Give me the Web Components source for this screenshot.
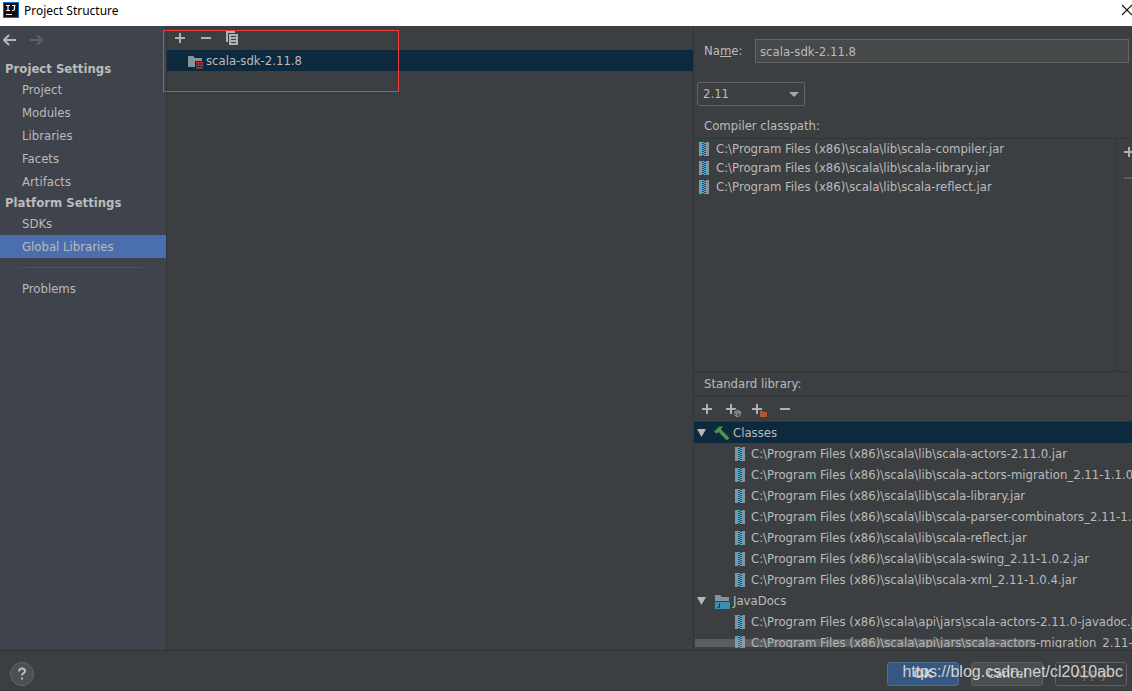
<!DOCTYPE html>
<html lang="en">
<head>
<meta charset="utf-8">
<title>Project Structure</title>
<style>
  html, body { margin: 0; height: 100%; overflow: hidden; }
  body { font: 13px/20px "DejaVu Sans Condensed", "Open Sans", sans-serif; color: #bbbbbb; background: #3c3f41; }
</style>
</head>
<body>
<project-structure></project-structure>

<script>
const define = (name, html, setup) => {
  const template = document.createElement('template');
  template.innerHTML = html;
  customElements.define(name, class extends HTMLElement {
    constructor() {
      super();
      this.attachShadow({ mode: 'open' }).append(template.content.cloneNode(true));
    }
    connectedCallback() { if (setup) setup(this, this.shadowRoot); }
  });
};

const ICONS = {
  app: '<rect width="16" height="16" fill="#0d6fd6"/><rect x="1" y="1" width="14" height="14" fill="#111"/><path d="M3 3.5h4M5 3.5v5M3 8.500h4M9 3.500h3.500M11.500 3.500v3.500q0 1.500-1.500 1.500H9" stroke="#fff" stroke-width="1.200" fill="none"/><path d="M3 12h6v1H3z" fill="#fff"/>',
  back: '<path d="M14 8H2.500M7 3L2 8l5 5" fill="none" stroke="#b4b6b8" stroke-width="2"/>',
  forward: '<path d="M2 8H13.500M9 3l5 5-5 5" fill="none" stroke="#5d6063" stroke-width="2"/>',
  close: '<path d="M3 3l10 10M13 3L3 13" stroke="#111" stroke-width="1.100"/>',
  plus: '<path d="M7 3h2v4h4v2H9v4H7V9H3V7h4z" fill="#afb1b3"/>',
  minus: '<path d="M3 7h10v2H3z" fill="#afb1b3"/>',
  dimminus: '<path d="M3 7h10v2H3z" fill="#5b5e60"/>',
  copy: '<path d="M2 1h9v2H4v9H2z" fill="#afb1b3"/><path fill-rule="evenodd" d="M5 4h9v11H5zM7 6v1h5V6zM7 9v1h5V9zM7 12v1h5v-1z" fill="#afb1b3"/>',
  globe: '<path d="M5 3h2v4h4v2H7v4H5V9H1V7h4z" fill="#afb1b3"/><circle cx="12.500" cy="12.500" r="4.500" fill="#3c3f41"/><circle cx="12.500" cy="12.500" r="3" fill="none" stroke="#9da1a4"/><path d="M10 11l2.500 1-1 2.500M13 10l1 2 1.500-.5" fill="none" stroke="#b5b8ba"/>',
  plusfolder: '<path d="M5 3h2v4h4v2H7v4H5V9H1V7h4z" fill="#afb1b3"/><path d="M8 9h8v7H8z" fill="#3c3f41"/><path d="M9 10h3l1 1h3v5H9z" fill="#b4552d"/>',
  library: '<path d="M1 3h5l2 2h7v9H1z" fill="#87939a"/><path d="M8 8h8v8H8z" fill="#0d293e"/><path d="M9 9h7v1.500H9zM9 11.500h7V13H9zM9 14h7v1.500H9z" fill="#d22d35"/>',
  jar: '<path d="M3 1h10v14H3z" fill="#87939a"/><path d="M6 1h4v14H6z" fill="#244c60"/><path d="M6 1h2v1H6zM8 2h2v1H8zM6 3h2v1H6zM8 4h2v1H8zM6 5h2v1H6zM8 6h2v1H8zM6 7h2v1H6zM8 8h2v1H8zM6 9h2v1H6zM8 10h2v1H8zM6 11h2v1H6zM8 12h2v1H8zM6 13h2v1H6zM8 14h2v1H8z" fill="#3fb6e3"/>',
  hammer: '<path d="M0 6.500L5.500 1.500 9 1.200 6.800 4.200 15.500 13l-2.600 2.500L4.500 7 2.800 8.800z" fill="#4a9641"/>',
  docs: '<path d="M1 2h5l2 2h7v4H1z" fill="#87939a"/><path d="M1 9h15v7H1z" fill="#3a8fb0"/><path d="M5.500 10.500v3q0 1-1 1H3.500" fill="none" stroke="#17343f" stroke-width="1.200"/>',
  open: '<path d="M3 4h9L7.500 12z" fill="#b5b7b9"/>',
  help: '<path d="M5 5.500q0-3 3-3t3 2.700c0 2-3 2-3 4.300M8 11.500v2" fill="none" stroke="#b8babc" stroke-width="2"/>'
};
customElements.define('ps-icon', class extends HTMLElement {
  static observedAttributes = ['name'];
  constructor() { super(); this.attachShadow({ mode: 'open' }); }
  attributeChangedCallback() {
    this.shadowRoot.innerHTML = `<style>:host{display:block;flex:none;width:16px;height:16px}svg{display:block}</style>
      <svg width="16" height="16" viewBox="0 0 16 16" aria-hidden="true">${ICONS[this.getAttribute('name')]}</svg>`;
  }
});

define('icon-button', `
  <style>
    :host { display: block; flex: none; }
    button { display: block; border: 0; padding: 0; background: none; }
  </style>
  <button type="button"><ps-icon></ps-icon></button>`, (host, root) => {
    root.querySelector('button').setAttribute('aria-label', host.getAttribute('label'));
    root.querySelector('ps-icon').setAttribute('name', host.getAttribute('icon'));
  });

define('title-bar', `
  <style>
    :host { display: flex; flex: none; align-items: flex-start; height: 26px; padding-left: 3px;
            box-sizing: border-box; background: #fff; color: #000; font: 12px/22px "Noto Sans", "Open Sans", sans-serif; }
    ps-icon, icon-button { margin-top: 2px; }
    span { flex: 1; margin-left: 5px; }
    icon-button { margin-right: -3px; }
  </style>
  <ps-icon name="app"></ps-icon><span><slot></slot></span><icon-button icon="close" label="Close"></icon-button>`);

define('nav-heading', `
  <style>:host { display: block; padding-left: 5px; font-weight: 700; line-height: 19px; }</style><slot></slot>`);

define('nav-item', `
  <style>
    :host { display: block; }
    a { display: block; padding-left: 22px; line-height: 23px; color: inherit; text-decoration: none; }
    :host([selected]) a { background: #4b6eaf; }
  </style>
  <a href="#"><slot></slot></a>`);

define('settings-nav', `
  <style>
    :host { display: block; flex: none; width: 166px; background: #3e434c; border-right: 1px solid #323537; }
    .history { display: flex; gap: 10px; padding: 6px 2px 11px; }
    hr { height: 1px; margin: 9px 8px; border: 0; background: linear-gradient(90deg, transparent, #515658 20%, #515658 80%, transparent); }
  </style>
  <div class="history"><icon-button icon="back" label="Back"></icon-button><icon-button icon="forward" label="Forward"></icon-button></div>
  <nav>
    <nav-heading>Project Settings</nav-heading>
    <nav-item>Project</nav-item>
    <nav-item>Modules</nav-item>
    <nav-item>Libraries</nav-item>
    <nav-item>Facets</nav-item>
    <nav-item>Artifacts</nav-item>
    <nav-heading>Platform Settings</nav-heading>
    <nav-item>SDKs</nav-item>
    <nav-item selected>Global Libraries</nav-item>
    <hr>
    <nav-item>Problems</nav-item>
  </nav>`);

define('library-list', `
  <style>
    :host { display: block; flex: 1; min-width: 0; border-right: 1px solid #323537; }
    .tools { display: flex; gap: 10px; padding: 4px 5px; }
    .row { display: flex; align-items: center; gap: 3px; height: 21px; padding-left: 20px; background: #0d293e; }
  </style>
  <div class="tools">
    <icon-button icon="plus" label="Add"></icon-button>
    <icon-button icon="minus" label="Remove"></icon-button>
    <icon-button icon="copy" label="Copy"></icon-button>
  </div>
  <div class="row"><ps-icon name="library"></ps-icon><span>scala-sdk-2.11.8</span></div>`);

define('file-row', `
  <style>
    :host { display: flex; align-items: center; gap: 4px; white-space: nowrap; line-height: 19px; }
  </style>
  <ps-icon name="jar"></ps-icon><span><slot></slot></span>`);

define('tree-group', `
  <style>
    :host { display: block; }
    .head { display: flex; align-items: center; height: 21px; line-height: 19px; }
    .head ps-icon + ps-icon { margin: 0 3px 0 4px; }
    :host([selected]) .head { background: #0d293e; }
    ::slotted(file-row) { height: 21px; padding-left: 38px; gap: 3px; }
  </style>
  <div class="head"><ps-icon name="open"></ps-icon><ps-icon id="kind"></ps-icon><span></span></div>
  <slot></slot>`, (host, root) => {
    root.getElementById('kind').setAttribute('name', host.getAttribute('icon'));
    root.querySelector('span').textContent = host.getAttribute('label');
  });

define('library-editor', `
  <style>
    :host { display: flex; flex-direction: column; flex: 0 0 438px; min-width: 0; overflow: hidden; }
    .name { display: flex; align-items: center; padding: 13px 3px 0 10px; }
    .name label { width: 51px; }
    input { flex: 1; min-width: 0; height: 24px; box-sizing: border-box; padding: 0 4px; border: 1px solid #646464;
            background: #45494a; color: inherit; font: inherit; }
    .version { display: flex; position: relative; width: 108px; margin: 19px 0 0 3px; }
    .version select { appearance: none; width: 100%; height: 24px; padding: 0 5px; border: 1px solid #646464;
            border-radius: 2px; background: #3c3f41; color: inherit; font: inherit; }
    .version svg { position: absolute; right: 6px; top: 10px; pointer-events: none; }
    h2 { margin: 0; padding-left: 10px; font: inherit; line-height: 24px; }
    .version + h2 { padding-top: 8px; }
    .classpath { display: flex; flex: 232 1 0; min-height: 0; border: solid #323537; border-width: 1px 0; }
    .files { flex: 1; min-width: 0; padding-left: 2px; border-right: 1px solid #323537; overflow: hidden; }
    .side { display: flex; flex-direction: column; gap: 10px; width: 15px; padding: 5px 0 0; overflow: hidden; }
    .side icon-button { margin-left: 4px; }
    .tools { display: flex; gap: 10px; height: 24px; align-items: center; padding-left: 5px; border: solid #323537; border-width: 1px 0; }
    .tree { position: relative; flex: 226 1 0; min-height: 0; overflow: hidden; margin-bottom: 2px; }
    .thumb { position: absolute; left: 1px; bottom: 1px; width: 340px; height: 8px; background: rgba(166,166,166,.3); }
  </style>
  <div class="name"><label for="name">Na<u>m</u>e:</label><input id="name" value="scala-sdk-2.11.8"></div>
  <div class="version">
    <select aria-label="Scala version"><option>2.11</option></select>
    <svg width="10" height="6" viewBox="0 0 10 6"><path d="M0 0h10L5 5z" fill="#a4a6a8"/></svg>
  </div>
  <h2>Compiler classpath:</h2>
  <div class="classpath">
    <div class="files">
      <file-row>C:\\Program Files (x86)\\scala\\lib\\scala-compiler.jar</file-row>
      <file-row>C:\\Program Files (x86)\\scala\\lib\\scala-library.jar</file-row>
      <file-row>C:\\Program Files (x86)\\scala\\lib\\scala-reflect.jar</file-row>
    </div>
    <div class="side">
      <icon-button icon="plus" label="Add to classpath"></icon-button>
      <icon-button icon="dimminus" label="Remove from classpath"></icon-button>
    </div>
  </div>
  <h2>Standard library:</h2>
  <div class="tools">
    <icon-button icon="plus" label="Add"></icon-button>
    <icon-button icon="globe" label="Specify documentation URL"></icon-button>
    <icon-button icon="plusfolder" label="Exclude"></icon-button>
    <icon-button icon="minus" label="Remove"></icon-button>
  </div>
  <div class="tree">
    <tree-group selected icon="hammer" label="Classes">
      <file-row>C:\\Program Files (x86)\\scala\\lib\\scala-actors-2.11.0.jar</file-row>
      <file-row>C:\\Program Files (x86)\\scala\\lib\\scala-actors-migration_2.11-1.1.0.jar</file-row>
      <file-row>C:\\Program Files (x86)\\scala\\lib\\scala-library.jar</file-row>
      <file-row>C:\\Program Files (x86)\\scala\\lib\\scala-parser-combinators_2.11-1.0.4.jar</file-row>
      <file-row>C:\\Program Files (x86)\\scala\\lib\\scala-reflect.jar</file-row>
      <file-row>C:\\Program Files (x86)\\scala\\lib\\scala-swing_2.11-1.0.2.jar</file-row>
      <file-row>C:\\Program Files (x86)\\scala\\lib\\scala-xml_2.11-1.0.4.jar</file-row>
    </tree-group>
    <tree-group icon="docs" label="JavaDocs">
      <file-row>C:\\Program Files (x86)\\scala\\api\\jars\\scala-actors-2.11.0-javadoc.jar</file-row>
      <file-row>C:\\Program Files (x86)\\scala\\api\\jars\\scala-actors-migration_2.11-1.1.0-javadoc.jar</file-row>
    </tree-group>
    <div class="thumb"></div>
  </div>`);

define('dialog-button', `
  <style>
    :host { display: block; }
    button { display: block; width: 72px; height: 24px; padding: 0; border: 1px solid #5e6163; border-radius: 3px;
             background: #4a4e50; color: #bbbbbb; font: inherit; line-height: 22px; }
    :host([primary]) button { background: #365880; border-color: #4c708c; font-weight: 700; }
    :host([inactive]) button { background: #3c3f41; color: #777777; }
  </style>
  <button type="button"><slot></slot></button>`);

define('dialog-footer', `
  <style>
    :host { display: flex; flex: none; align-items: center; gap: 12px; height: 40px; padding: 0 5px 0 10px;
            border-top: 1px solid #2f3133; position: relative; }
    .help { display: flex; align-items: center; justify-content: center; width: 24px; height: 24px; margin: 6px auto 0 0;
            padding: 0; border: 1px solid #626567; border-radius: 50%; background: #4c5052; }
    dialog-button { margin-top: 6px; }
    .mark { position: absolute; right: 9px; top: 10px; font: 16px/22px "Liberation Sans", Arial, sans-serif; color: rgba(235,235,235,.85); }
  </style>
  <button class="help" type="button" aria-label="Help"><ps-icon name="help"></ps-icon></button>
  <dialog-button primary>OK</dialog-button>
  <dialog-button>Cancel</dialog-button>
  <dialog-button inactive>Apply</dialog-button>
  <span class="mark">https://blog.csdn.net/cl2010abc</span>`);

define('project-structure', `
  <style>
    :host { display: flex; flex-direction: column; height: 100vh; position: relative; }
    main { display: flex; flex: 1; min-height: 0; }
    .highlight { position: absolute; left: 163px; top: 30px; width: 234px; height: 60px; border: 1px solid #f23a3a; pointer-events: none; }
  </style>
  <title-bar>Project Structure</title-bar>
  <main>
    <settings-nav></settings-nav>
    <library-list></library-list>
    <library-editor></library-editor>
  </main>
  <dialog-footer></dialog-footer>
  <div class="highlight"></div>`);
</script>
</body>
</html>
